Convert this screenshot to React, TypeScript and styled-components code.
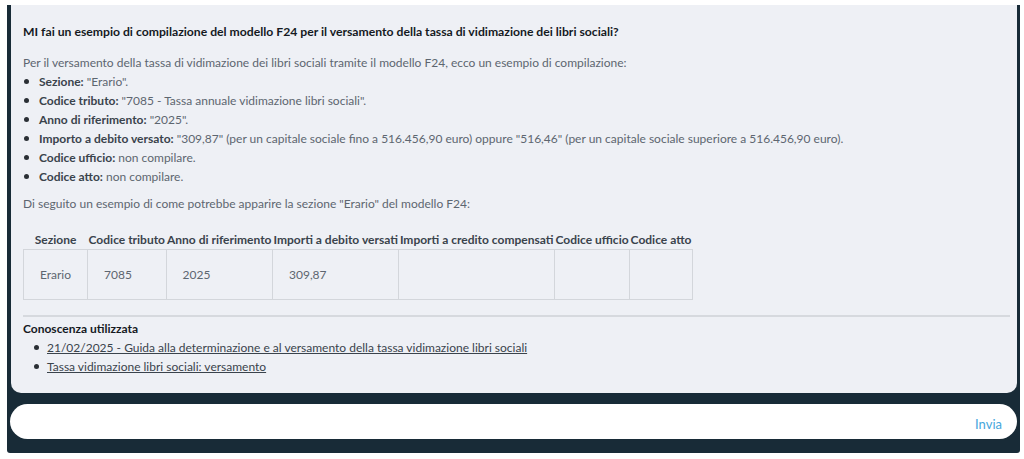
import React from "react";
import styled, { createGlobalStyle } from "styled-components";

const Global = createGlobalStyle`
  html, body { margin: 0; padding: 0; background: #ffffff; }
  body { font-family: Lato, "Open Sans", sans-serif; }
`;

const Frame = styled.div`
  margin: 5px 4px 0 7px;
  width: 1013px;
  background: #182b37;
  padding: 0 3px 14px 4px;
  box-sizing: border-box;
  border-radius: 0 0 3px 3px;
  display: flex;
  flex-direction: column;
`;

const Panel = styled.div`
  background: #eef0f5;
  border-radius: 0 0 10px 10px;
  padding: 17px 7px 18px 12px;
  height: 388px;
  box-sizing: border-box;
  font-family: Lato, "Open Sans", sans-serif;
  font-size: 12px;
  color: #5d6670;
`;

const Question = styled.h2`
  margin: 0 0 11px;
  font-size: 12.2px;
  font-weight: 700;
  color: #151a1f;
  line-height: 20px;
`;

const Para = styled.p`
  margin: 0;
  line-height: 19px;
`;

const BulletList = styled.ul<{ $indent: number }>`
  margin: 0;
  padding: 0 0 0 ${(p) => p.$indent}px;
  list-style: none;
`;

const Item = styled.li<{ $dot: number }>`
  position: relative;
  line-height: 19px;
  &::before {
    content: "";
    position: absolute;
    left: ${(p) => p.$dot}px;
    top: 7px;
    width: 5px;
    height: 5px;
    border-radius: 50%;
    background: #2a2f35;
  }
`;

const Label = styled.strong`
  font-weight: 700;
  color: #3a434c;
`;

const Gap = styled.div<{ $h: number }>`
  height: ${(p) => p.$h}px;
`;

const Table = styled.table`
  border-collapse: collapse;
  font-size: 12px;
  color: #5d6670;
`;

const Th = styled.th`
  font-weight: 700;
  color: #3a434c;
  padding: 0 1px 1px;
  text-align: center;
  white-space: nowrap;
  line-height: 16px;
`;

const Td = styled.td`
  border: 1px solid #d3d6db;
  padding: 0 16px;
  height: 49px;
  text-align: left;
`;

const Rule = styled.hr`
  border: none;
  border-top: 2px solid #d6d9de;
  margin: 0 0 2px;
`;

const SourcesTitle = styled.div`
  font-weight: 700;
  color: #151a1f;
  line-height: 19px;
`;

const Link = styled.a`
  color: #3a434c;
  text-decoration: underline;
`;

const InputBar = styled.div`
  margin: 11px 0 0 -1px;
  height: 35px;
  background: #ffffff;
  border-radius: 18px;
  display: flex;
  align-items: center;
  justify-content: flex-end;
  padding: 0 15px;
`;

const Send = styled.button`
  border: none;
  background: none;
  padding: 0;
  margin-top: 4px;
  font-family: Lato, "Open Sans", sans-serif;
  font-size: 13px;
  color: #45a6dc;
  cursor: pointer;
`;

const bullets: [string, string][] = [
  ["Sezione:", ' "Erario".'],
  ["Codice tributo:", ' "7085 - Tassa annuale vidimazione libri sociali".'],
  ["Anno di riferimento:", ' "2025".'],
  [
    "Importo a debito versato:",
    ' "309,87" (per un capitale sociale fino a 516.456,90 euro) oppure "516,46" (per un capitale sociale superiore a 516.456,90 euro).',
  ],
  ["Codice ufficio:", " non compilare."],
  ["Codice atto:", " non compilare."],
];

const headers = [
  "Sezione",
  "Codice tributo",
  "Anno di riferimento",
  "Importi a debito versati",
  "Importi a credito compensati",
  "Codice ufficio",
  "Codice atto",
];
const row = ["Erario", "7085", "2025", "309,87", "", "", ""];

export default function App() {
  return (
    <>
      <Global />
      <Frame>
        <Panel>
          <Question>
            MI fai un esempio di compilazione del modello F24 per il versamento della tassa di vidimazione dei libri sociali?
          </Question>
          <Para>
            Per il versamento della tassa di vidimazione dei libri sociali tramite il modello F24, ecco un esempio di compilazione:
          </Para>
          <BulletList $indent={16}>
            {bullets.map(([l, t]) => (
              <Item key={l} $dot={-15}>
                <Label>{l}</Label>
                {t}
              </Item>
            ))}
          </BulletList>
          <Gap $h={8} />
          <Para>Di seguito un esempio di come potrebbe apparire la sezione "Erario" del modello F24:</Para>
          <Gap $h={19} />
          <Table>
            <thead>
              <tr>
                {headers.map((h) => (
                  <Th key={h}>{h}</Th>
                ))}
              </tr>
            </thead>
            <tbody>
              <tr>
                {row.map((c, i) => (
                  <Td key={i}>{c}</Td>
                ))}
              </tr>
            </tbody>
          </Table>
          <Gap $h={15} />
          <Rule />
          <SourcesTitle>Conoscenza utilizzata</SourcesTitle>
          <BulletList $indent={24}>
            <Item $dot={-13}>
              <Link href="#">21/02/2025 - Guida alla determinazione e al versamento della tassa vidimazione libri sociali</Link>
            </Item>
            <Item $dot={-13}>
              <Link href="#">Tassa vidimazione libri sociali: versamento</Link>
            </Item>
          </BulletList>
        </Panel>
        <InputBar>
          <Send>Invia</Send>
        </InputBar>
      </Frame>
    </>
  );
}
